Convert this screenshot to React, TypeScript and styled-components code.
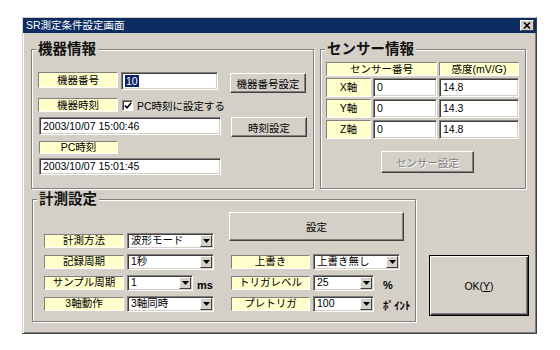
import { Fragment } from 'react';
import styled, { createGlobalStyle } from 'styled-components';

const FACE = '#d4d0c8';

const GlobalStyle = createGlobalStyle`
  body {
    margin: 0;
    background: #ffffff;
    font-family: "Liberation Sans", "Noto Sans CJK JP", sans-serif;
    font-size: 10.5px;
    color: #000;
  }
`;

const Window = styled.div`
  box-sizing: border-box;
  width: 515px;
  height: 317px;
  margin: 17px 0 0 22px;
  background: ${FACE};
  border: 1px solid;
  border-color: ${FACE} #404040 #404040 ${FACE};
  box-shadow: inset 1px 1px #fff, inset -1px -1px #808080;
  display: flex;
  flex-direction: column;
`;

const TitleBar = styled.div`
  height: 15px;
  background: #0c2c62;
  color: #fff;
  display: flex;
  align-items: center;
  justify-content: space-between;
  padding: 0 2px 0 3px;
`;

const TitleText = styled.span`
  line-height: 15px;
  white-space: nowrap;
`;

const CloseBox = styled.span`
  box-sizing: border-box;
  width: 14px;
  height: 11px;
  background: ${FACE};
  border: 1px solid;
  border-color: #fff #404040 #404040 #fff;
  display: flex;
  align-items: center;
  justify-content: center;
`;

const Body = styled.div`
  padding: 7px 0 0 8px;
  display: flex;
  flex-direction: column;
  gap: 1px;
`;

const TopRow = styled.div`
  display: grid;
  grid-template-columns: 283px 206px;
  column-gap: 6px;
`;

const BottomRow = styled.div`
  display: flex;
  align-items: flex-end;
  gap: 13px;
  padding-left: 1px;
`;

const Group = styled.fieldset<{ $w?: number }>`
  box-sizing: border-box;
  margin: 0;
  padding: 0;
  min-width: 0;
  width: ${p => (p.$w ? `${p.$w}px` : 'auto')};
  border: 1px solid #808080;
  box-shadow: inset 1px 1px #fff, 1px 1px #fff;
`;

const GroupTitle = styled.legend`
  margin-left: 4px;
  padding: 0 2px;
  font-size: 14.5px;
  font-weight: bold;
  line-height: 18px;
  color: #111;
  background: ${FACE};
`;

const Label = styled.div<{ $w?: number; $h?: number; $span?: number; $ml?: number }>`
  box-sizing: border-box;
  width: ${p => (p.$w ? `${p.$w}px` : 'auto')};
  height: ${p => (p.$h ? `${p.$h}px` : 'auto')};
  margin-left: ${p => p.$ml ?? 0}px;
  grid-column: ${p => (p.$span ? `span ${p.$span}` : 'auto')};
  flex-shrink: 0;
  background: #ffffcc;
  border: 1px solid;
  border-color: #808080 #fff #fff #808080;
  display: flex;
  align-items: center;
  justify-content: center;
  line-height: 1;
  white-space: nowrap;
`;

const TextBox = styled.div<{ $w?: number; $h?: number; $ml?: number }>`
  box-sizing: border-box;
  width: ${p => (p.$w ? `${p.$w}px` : 'auto')};
  height: ${p => (p.$h ? `${p.$h}px` : 'auto')};
  margin-left: ${p => p.$ml ?? 0}px;
  flex-shrink: 0;
  background: #fff;
  border: 1px solid;
  border-color: #808080 #fff #fff #808080;
  box-shadow: inset 1px 1px #404040, inset -1px -1px ${FACE};
  padding: 0 3px;
  display: flex;
  align-items: center;
  white-space: nowrap;
  line-height: 1;
`;

const Selected = styled.span`
  background: #0a246a;
  color: #fff;
  padding: 1px 1px;
`;

const Button = styled.button<{ $w: number; $h: number; $ml?: number; $mt?: number; $disabled?: boolean }>`
  box-sizing: border-box;
  width: ${p => p.$w}px;
  height: ${p => p.$h}px;
  margin: ${p => p.$mt ?? 0}px 0 0 ${p => p.$ml ?? 0}px;
  padding: 0;
  flex-shrink: 0;
  font: inherit;
  background: ${FACE};
  border: 1px solid;
  border-color: #fff #404040 #404040 #fff;
  box-shadow: inset -1px -1px #808080;
  color: ${p => (p.$disabled ? '#808080' : '#000')};
  text-shadow: ${p => (p.$disabled ? '1px 1px #fff' : 'none')};
  display: flex;
  align-items: center;
  justify-content: center;
  white-space: nowrap;
`;

const DefaultButton = styled(Button)`
  border: 1px solid #000;
  box-shadow: inset 1px 1px #fff, inset -1px -1px #404040, inset -2px -2px #808080;
  margin-bottom: 6px;
`;

const Underline = styled.span`
  text-decoration: underline;
`;

const DeviceBody = styled.div`
  margin: 14px 0 0 6px;
  padding-bottom: 13px;
  display: flex;
  flex-direction: column;
  gap: 4px;
`;

const Row = styled.div<{ $h: number; $gap?: number }>`
  height: ${p => p.$h}px;
  display: flex;
  align-items: flex-start;
  gap: ${p => p.$gap ?? 3}px;
`;

const CheckRow = styled.label`
  display: flex;
  align-items: center;
  gap: 4px;
  margin-left: 1px;
  height: 14px;
  white-space: nowrap;
`;

const CheckBox = styled.span`
  box-sizing: border-box;
  width: 11px;
  height: 11px;
  background: #fff;
  border: 1px solid;
  border-color: #808080 #fff #fff #808080;
  box-shadow: inset 1px 1px #404040;
  display: flex;
  align-items: center;
  justify-content: center;
`;

const SensorBody = styled.div`
  margin: 4px 0 0 5px;
  padding-bottom: 10px;
`;

const SensorGrid = styled.div`
  display: grid;
  grid-template-columns: 45px 64px 80px;
  grid-template-rows: 14px;
  grid-auto-rows: 19px;
  gap: 2px;
`;

const MeasureBody = styled.div`
  margin: 4px 0 0 11px;
  padding-bottom: 9px;
  display: flex;
  align-items: flex-end;
  gap: 15px;
`;

const Column = styled.div<{ $gap: number }>`
  display: flex;
  flex-direction: column;
  gap: ${p => p.$gap}px;
`;

const FieldRow = styled.div<{ $indent?: number }>`
  height: 17px;
  padding-left: ${p => p.$indent ?? 0}px;
  display: flex;
  align-items: center;
  gap: 3px;
`;

const Combo = styled(TextBox)`
  height: 16px;
  padding: 1px 1px 1px 3px;
  justify-content: space-between;
`;

const ComboArrow = styled.span`
  box-sizing: border-box;
  width: 12px;
  height: 12px;
  background: ${FACE};
  border: 1px solid;
  border-color: #fff #404040 #404040 #fff;
  display: flex;
  align-items: center;
  justify-content: center;
`;

const Unit = styled.span<{ $ml: number }>`
  margin-left: ${p => p.$ml}px;
  align-self: flex-end;
  font-size: 11px;
  font-weight: bold;
  line-height: 12px;
  white-space: nowrap;
`;

const Arrow = () => (
  <svg width="7" height="4" viewBox="0 0 7 4">
    <polygon points="0,0 7,0 3.5,4" fill="#000" />
  </svg>
);

const Select = ({ w, value }: { w: number; value: string }) => (
  <Combo $w={w}>
    <span>{value}</span>
    <ComboArrow>
      <Arrow />
    </ComboArrow>
  </Combo>
);

const sensors = [
  { axis: 'X軸', no: '0', sens: '14.8' },
  { axis: 'Y軸', no: '0', sens: '14.3' },
  { axis: 'Z軸', no: '0', sens: '14.8' },
];

export default function App() {
  return (
    <>
      <GlobalStyle />
      <Window>
        <TitleBar>
          <TitleText>SR測定条件設定画面</TitleText>
          <CloseBox>
            <svg width="8" height="7" viewBox="0 0 8 7">
              <path d="M1 0.5 L7 6.5 M7 0.5 L1 6.5" stroke="#000" strokeWidth="1.5" />
            </svg>
          </CloseBox>
        </TitleBar>
        <Body>
          <TopRow>
            <Group>
              <GroupTitle>機器情報</GroupTitle>
              <DeviceBody>
                <Row $h={22}>
                  <Label $w={80} $h={16}>機器番号</Label>
                  <TextBox $w={97} $h={18}>
                    <Selected>10</Selected>
                  </TextBox>
                  <Button $w={76} $h={20} $ml={9} $mt={1}>機器番号設定</Button>
                </Row>
                <Row $h={15}>
                  <Label $w={80} $h={14}>機器時刻</Label>
                  <CheckRow>
                    <CheckBox>
                      <svg width="8" height="7" viewBox="0 0 8 7">
                        <polyline points="0.8,3.5 3,5.8 7.2,0.8" fill="none" stroke="#000" strokeWidth="1.6" />
                      </svg>
                    </CheckBox>
                    PC時刻に設定する
                  </CheckRow>
                </Row>
                <Row $h={20} $gap={10}>
                  <TextBox $w={182} $h={18} $ml={1}>2003/10/07 15:00:46</TextBox>
                  <Button $w={76} $h={20}>時刻設定</Button>
                </Row>
                <Row $h={13}>
                  <Label $w={79} $h={13} $ml={1}>PC時刻</Label>
                </Row>
                <Row $h={17}>
                  <TextBox $w={182} $h={17} $ml={1}>2003/10/07 15:01:45</TextBox>
                </Row>
              </DeviceBody>
            </Group>
            <Group>
              <GroupTitle>センサー情報</GroupTitle>
              <SensorBody>
                <SensorGrid>
                  <Label $span={2}>センサー番号</Label>
                  <Label>感度(mV/G)</Label>
                  {sensors.map(s => (
                    <Fragment key={s.axis}>
                      <Label>{s.axis}</Label>
                      <TextBox>{s.no}</TextBox>
                      <TextBox>{s.sens}</TextBox>
                    </Fragment>
                  ))}
                </SensorGrid>
                <Button $w={93} $h={22} $ml={55} $mt={12} $disabled>センサー設定</Button>
              </SensorBody>
            </Group>
          </TopRow>
          <BottomRow>
            <Group $w={384}>
              <GroupTitle>計測設定</GroupTitle>
              <MeasureBody>
                <Column $gap={4}>
                  <FieldRow>
                    <Label $w={80} $h={14}>計測方法</Label>
                    <Select w={87} value="波形モード" />
                  </FieldRow>
                  <FieldRow>
                    <Label $w={80} $h={14}>記録周期</Label>
                    <Select w={87} value="1秒" />
                  </FieldRow>
                  <FieldRow>
                    <Label $w={80} $h={14}>サンプル周期</Label>
                    <Select w={66} value="1" />
                    <Unit $ml={1}>ms</Unit>
                  </FieldRow>
                  <FieldRow>
                    <Label $w={80} $h={14}>3軸動作</Label>
                    <Select w={87} value="3軸同時" />
                  </FieldRow>
                </Column>
                <Column $gap={12}>
                  <Button $w={175} $h={29}>設定</Button>
                  <Column $gap={4}>
                    <FieldRow $indent={2}>
                      <Label $w={79} $h={14}>上書き</Label>
                      <Select w={87} value="上書き無し" />
                    </FieldRow>
                    <FieldRow $indent={2}>
                      <Label $w={79} $h={14}>トリガレベル</Label>
                      <Select w={61} value="25" />
                      <Unit $ml={6}>%</Unit>
                    </FieldRow>
                    <FieldRow $indent={2}>
                      <Label $w={79} $h={14}>プレトリガ</Label>
                      <Select w={61} value="100" />
                      <Unit $ml={6}>ﾎﾟｲﾝﾄ</Unit>
                    </FieldRow>
                  </Column>
                </Column>
              </MeasureBody>
            </Group>
            <DefaultButton $w={100} $h={61}>
              OK(<Underline>Y</Underline>)
            </DefaultButton>
          </BottomRow>
        </Body>
      </Window>
    </>
  );
}
